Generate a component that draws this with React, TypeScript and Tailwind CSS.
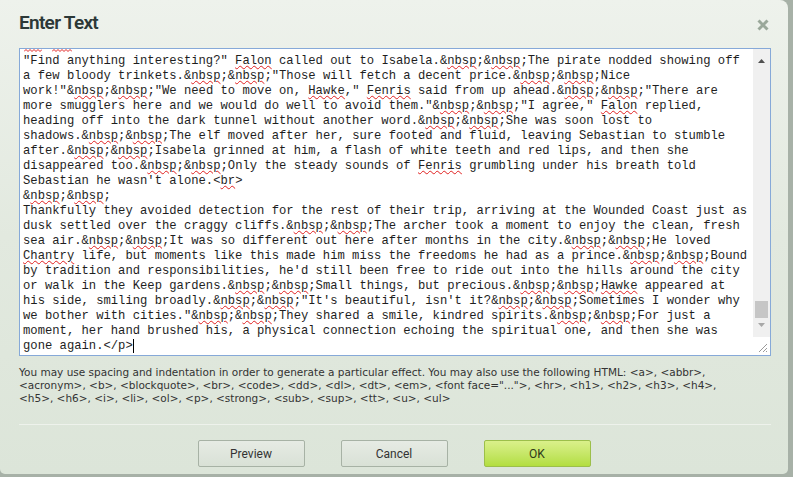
import React from "react";

type Piece = string | { s: string };

// words flagged by the browser's spell checker get a red wavy underline
const FLAGGED = /(nbsp|Falon|Hawke|Fenris|Chantry|\bbr\b)/g;

function mark(line: string): Piece[] {
  const out: Piece[] = [];
  let last = 0;
  line.replace(FLAGGED, (m, _g, idx: number) => {
    if (idx > last) out.push(line.slice(last, idx));
    out.push({ s: m });
    last = idx + m.length;
    return m;
  });
  if (last < line.length) out.push(line.slice(last));
  return out;
}

const LINES = [
  '"Find anything interesting?" Falon called out to Isabela.&nbsp;&nbsp;The pirate nodded showing off',
  'a few bloody trinkets.&nbsp;&nbsp;"Those will fetch a decent price.&nbsp;&nbsp;Nice',
  'work!"&nbsp;&nbsp;"We need to move on, Hawke," Fenris said from up ahead.&nbsp;&nbsp;"There are',
  'more smugglers here and we would do well to avoid them."&nbsp;&nbsp;"I agree," Falon replied,',
  "heading off into the dark tunnel without another word.&nbsp;&nbsp;She was soon lost to",
  "shadows.&nbsp;&nbsp;The elf moved after her, sure footed and fluid, leaving Sebastian to stumble",
  "after.&nbsp;&nbsp;Isabela grinned at him, a flash of white teeth and red lips, and then she",
  "disappeared too.&nbsp;&nbsp;Only the steady sounds of Fenris grumbling under his breath told",
  "Sebastian he wasn't alone.<br>",
  "&nbsp;&nbsp;",
  "Thankfully they avoided detection for the rest of their trip, arriving at the Wounded Coast just as",
  "dusk settled over the craggy cliffs.&nbsp;&nbsp;The archer took a moment to enjoy the clean, fresh",
  "sea air.&nbsp;&nbsp;It was so different out here after months in the city.&nbsp;&nbsp;He loved",
  "Chantry life, but moments like this made him miss the freedoms he had as a prince.&nbsp;&nbsp;Bound",
  "by tradition and responsibilities, he'd still been free to ride out into the hills around the city",
  "or walk in the Keep gardens.&nbsp;&nbsp;Small things, but precious.&nbsp;&nbsp;Hawke appeared at",
  'his side, smiling broadly.&nbsp;&nbsp;"It\'s beautiful, isn\'t it?&nbsp;&nbsp;Sometimes I wonder why',
  'we bother with cities."&nbsp;&nbsp;They shared a smile, kindred spirits.&nbsp;&nbsp;For just a',
  "moment, her hand brushed his, a physical connection echoing the spiritual one, and then she was",
  "gone again.</p>",
];

const HELP = [
  "You may use spacing and indentation in order to generate a particular effect. You may also use the following HTML: <a>, <abbr>,",
  '<acronym>, <b>, <blockquote>, <br>, <code>, <dd>, <dl>, <dt>, <em>, <font face="...">, <hr>, <h1>, <h2>, <h3>, <h4>,',
  "<h5>, <h6>, <i>, <li>, <ol>, <p>, <strong>, <sub>, <sup>, <tt>, <u>, <ul>",
];

function Squiggle({ w }: { w: number }) {
  const pts: string[] = [];
  for (let x = 0; x <= w; x += 2) pts.push(`${x},${(x / 2) % 2 === 0 ? 2.5 : 0.5}`);
  return (
    <svg width={w} height="3" viewBox={`0 0 ${w} 3`} className="block">
      <polyline points={pts.join(" ")} fill="none" stroke="#e02020" strokeWidth="1" />
    </svg>
  );
}

function Scrollbar() {
  return (
    <div className="w-[17px] flex flex-col bg-white">
      <div className="flex-1 bg-[#f0f0f0] flex flex-col items-center">
        <svg width="9" height="22" viewBox="0 0 9 22" className="mt-[1px]">
          <path d="M1 13 L4.5 9 L8 13 Z" fill="#505050" />
        </svg>
        <div className="flex-1" />
        <div className="w-[13px] h-[17px] bg-[#c6c6c6]" />
        <svg width="9" height="16" viewBox="0 0 9 16">
          <path d="M1 5 L4.5 9 L8 5 Z" fill="#a8a8a8" />
        </svg>
        <div className="h-[3px]" />
      </div>
      <div className="h-[18px] flex items-end justify-end pr-[2px] pb-[2px]">
        <svg width="10" height="10" viewBox="0 0 10 10">
          <path d="M9 1 L1 9 M9 5 L5 9 M9 8 L8 9" stroke="#9a9a9a" strokeWidth="1" />
        </svg>
      </div>
    </div>
  );
}

function Btn({ label, ok }: { label: string; ok?: boolean }) {
  return (
    <button
      className={
        ok
          ? "w-[107px] h-[27px] rounded-[2px] border border-[#9cbf4a] bg-gradient-to-b from-[#daf08a] to-[#b3de3e] text-[12px] text-[#2d3a1a] font-['Roboto',sans-serif]"
          : "w-[107px] h-[27px] rounded-[2px] border border-[#a7b2a5] bg-gradient-to-b from-[#e6ebe4] to-[#d9e1d6] text-[12px] text-[#333] font-['Roboto',sans-serif]"
      }
    >
      {label}
    </button>
  );
}

export default function App() {
  return (
    <div className="w-[793px] h-[477px] bg-[#a7b1a7] overflow-hidden">
      <div className="w-[788px] h-[474px] rounded-tr-[8px] rounded-b-[5px] bg-gradient-to-b from-[#eef2ec] via-[#e2e9df] to-[#dce5d9] flex flex-col pl-[19px] pr-[17px]">
        <div className="h-[48px] flex items-start justify-between">
          <h1 className="mt-[11px] text-[19px] leading-[24px] font-semibold tracking-[-0.7px] text-[#2c3837] font-['Roboto',sans-serif]">
            Enter Text
          </h1>
          <svg width="12" height="12" viewBox="0 0 12 12" className="mt-[19px] mr-[2px]">
            <path d="M1.5 1.5 L10.5 10.5 M10.5 1.5 L1.5 10.5" stroke="#9aa89a" strokeWidth="3" />
          </svg>
        </div>

        <div className="h-[308px] border border-[#86a9d8] bg-white flex">
          <div className="flex-1 overflow-hidden pl-[3px]">
            {/* tail of the line scrolled out above: only its squiggles show */}
            <div className="h-[5px] flex items-start gap-[10px] pl-[1px]">
              <Squiggle w={18} />
              <Squiggle w={20} />
            </div>
            <div className="leading-[15px] text-[12.2px] text-[#1e1e1e] font-['Liberation_Mono',monospace] whitespace-pre">
              {LINES.map((line, i) => (
                <div key={i}>
                  {mark(line).map((p, j) =>
                    typeof p === "string" ? (
                      <span key={j}>{p}</span>
                    ) : (
                      <span
                        key={j}
                        className="underline decoration-wavy decoration-[#e02020] decoration-1 underline-offset-[1px]"
                      >
                        {p.s}
                      </span>
                    )
                  )}
                  {i === LINES.length - 1 && (
                    <span className="inline-block w-px h-[14px] bg-black align-middle" />
                  )}
                </div>
              ))}
            </div>
          </div>
          <Scrollbar />
        </div>

        <div className="mt-[10px] text-[10.5px] leading-[13px] text-[#333] font-['DejaVu_Sans',sans-serif]">
          {HELP.map((h, i) => (
            <div key={i} className="whitespace-nowrap">
              {h}
            </div>
          ))}
        </div>

        <div className="mt-[19px] h-px bg-[#c3cbc1] border-b border-[#eef2ec]" />

        <div className="mt-[15px] flex justify-center gap-[36px] pr-[2px]">
          <Btn label="Preview" />
          <Btn label="Cancel" />
          <Btn label="OK" ok />
        </div>
      </div>
    </div>
  );
}
